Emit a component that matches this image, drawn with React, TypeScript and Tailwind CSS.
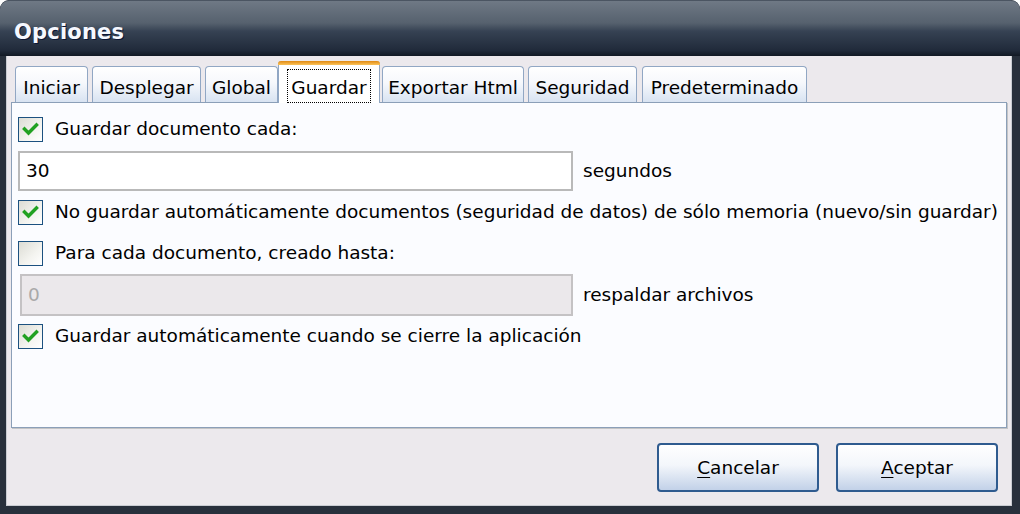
import React from 'react';

const font = 'font-["DejaVu_Sans",sans-serif]';

const tabs = [
  { label: 'Iniciar', cls: 'ml-[8px] w-[73px]' },
  { label: 'Desplegar', cls: 'ml-[4px] w-[109px]' },
  { label: 'Global', cls: 'ml-[4px] w-[73px]' },
  { label: 'Guardar', cls: 'ml-0 w-[102px]', active: true },
  { label: 'Exportar Html', cls: 'ml-[2px] w-[142px]' },
  { label: 'Seguridad', cls: 'ml-[4px] w-[109px]' },
  { label: 'Predeterminado', cls: 'ml-[5px] w-[165px]' },
];

const Check: React.FC<{ checked?: boolean }> = ({ checked }) => (
  <div className="w-[25px] h-[25px] shrink-0 border border-[#1c5180] bg-[linear-gradient(135deg,#dcdcd4_0%,#f4f4f0_60%,#ffffff_100%)] flex items-center justify-center">
    {checked && (
      <svg width="17" height="15" viewBox="0 0 17 15">
        <polyline points="2.5,7 6.5,11 14.5,3" fill="none" stroke="#21a121" strokeWidth="3.4" strokeLinecap="square" />
      </svg>
    )}
  </div>
);

const Row: React.FC<{ checked?: boolean; label: string; className?: string }> = ({ checked, label, className }) => (
  <div className={`flex items-center h-[25px] ${className ?? ''}`}>
    <Check checked={checked} />
    <span className="ml-[12px] text-[18.5px] text-black leading-none whitespace-nowrap">{label}</span>
  </div>
);

export default function App() {
  return (
    <div className={`${font} w-[1020px] h-[514px] rounded-t-[9px] bg-[#28303c] flex flex-col overflow-hidden`}>
      {/* title bar */}
      <div className="h-[56px] shrink-0 rounded-t-[9px] border-t border-[#4b5562] bg-[linear-gradient(to_bottom,#6f7985_0%,#56616e_40%,#364253_55%,#202a3a_90%,#121924_100%)] flex items-center pl-[14px] pt-[8px]">
        <span className="text-[21px] font-bold text-[#f6f8ff] [text-shadow:1px_1px_0_#0b1535] tracking-[0.2px]">Opciones</span>
      </div>

      {/* body */}
      <div className="ml-[6px] mr-[8px] mb-[8px] flex-1 bg-[#ece9ed] border-l border-r border-b border-[#c9ccd2] flex flex-col pt-[5px]">
        {/* tabs */}
        <div className="flex items-end h-[41px]">
          {tabs.map((t) =>
            t.active ? (
              <div
                key={t.label}
                className={`${t.cls} relative z-10 h-[42px] -mb-px rounded-t-[4px] border-x border-[#91a7c4] bg-white flex flex-col`}
              >
                <div className="h-[4px] rounded-t-[3px] bg-[linear-gradient(to_bottom,#e08a14,#fbc35a)] -mx-px" />
                <div className="flex-1 flex items-end justify-center">
                  <div className="border border-dotted border-black w-[84px] h-[34px] flex items-center justify-center text-[18.5px] text-black pt-[4px]">
                    {t.label}
                  </div>
                </div>
              </div>
            ) : (
              <div
                key={t.label}
                className={`${t.cls} h-[36px] rounded-t-[4px] border border-b-0 border-[#91a7c4] bg-[linear-gradient(to_bottom,#ffffff_0%,#f6f8fc_45%,#d8e3f2_100%)] flex items-center justify-center text-[18.5px] text-black pt-[6px]`}
              >
                {t.label}
              </div>
            )
          )}
        </div>

        {/* panel */}
        <div className="ml-[4px] w-[996px] h-[326px] border border-[#8b9fb8] bg-[#fbfcff] shadow-[1px_1px_0_#c3c4c6] flex flex-col px-[6px] pt-[14px]">
          <Row checked label="Guardar documento cada:" />
          <div className="mt-[9px] flex items-center">
            <div className="w-[555px] h-[40px] border-2 border-[#b9b9b9] bg-white flex items-center pl-[6px] text-[18.5px] text-black">30</div>
            <span className="ml-[10px] text-[18.5px] text-black">segundos</span>
          </div>
          <Row checked label="No guardar automáticamente documentos (seguridad de datos) de sólo memoria (nuevo/sin guardar)" className="mt-[9px]" />
          <Row label="Para cada documento, creado hasta:" className="mt-[16px]" />
          <div className="mt-[8px] flex items-center">
            <div className="ml-[2px] w-[553px] h-[42px] border-2 border-[#c4c2c4] bg-[#ebe8eb] flex items-center pl-[6px] text-[18.5px] text-[#a9a9a9]">0</div>
            <span className="ml-[10px] text-[18.5px] text-black">respaldar archivos</span>
          </div>
          <Row checked label="Guardar automáticamente cuando se cierre la aplicación" className="mt-[8px]" />
        </div>

        {/* buttons */}
        <div className="mt-[15px] flex justify-end gap-[17px] pr-[13px]">
          <button className="w-[162px] h-[49px] rounded-[4px] border-2 border-[#2f5b8f] bg-[linear-gradient(to_bottom,#ffffff_0%,#f3f6fb_45%,#c2d1e8_100%)] text-[18.5px] text-black">
            <span className="underline underline-offset-[3px]">C</span>ancelar
          </button>
          <button className="w-[162px] h-[49px] rounded-[4px] border-2 border-[#2f5b8f] bg-[linear-gradient(to_bottom,#ffffff_0%,#f3f6fb_45%,#c2d1e8_100%)] text-[18.5px] text-black">
            <span className="underline underline-offset-[3px]">A</span>ceptar
          </button>
        </div>
      </div>
    </div>
  );
}
